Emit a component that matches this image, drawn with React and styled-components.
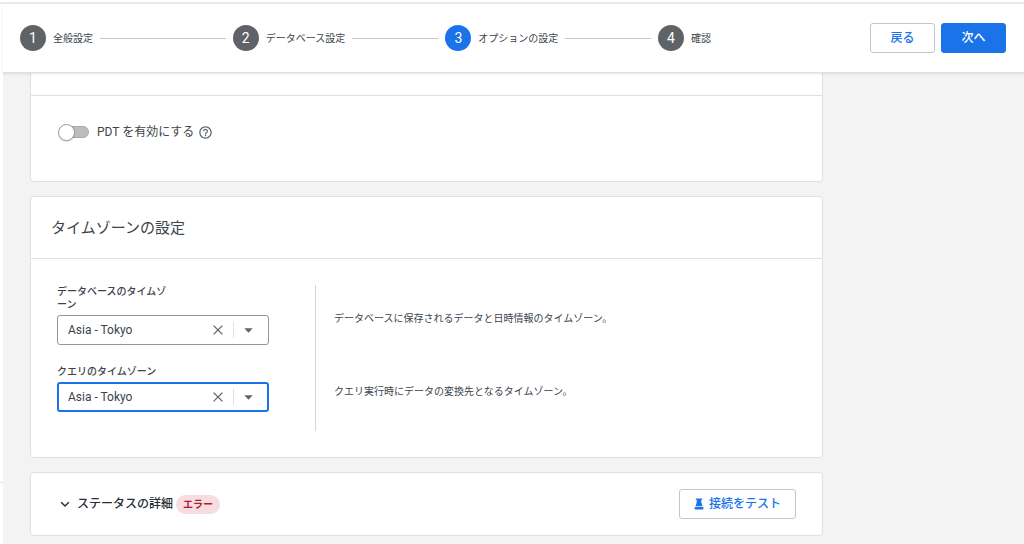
import React, { useState } from "react";
import styled, { createGlobalStyle } from "styled-components";

const line = "#dee0e2";
const ink = "#3c444b";
const blue = "#1a73e8";

const GlobalStyle = createGlobalStyle`
  *, *::before, *::after { box-sizing: border-box; }
  body {
    margin: 0;
    background: #f3f3f3;
    color: ${ink};
    font-family: Roboto, "Noto Sans CJK JP", sans-serif;
    font-size: 10px;
    line-height: 13px;
  }
  button, select, input { font: inherit; color: inherit; margin: 0; }
`;

const Shell = styled.div`
  display: grid;
  grid-template-columns: 3px minmax(0, 1fr);
  grid-template-rows: 4px auto;
  height: 100vh;
  overflow: hidden;
`;

const TopEdge = styled.div`
  grid-column: 1 / -1;
  background: #fff;
  border-bottom: 2px solid #e8e9ea;
`;

const Rail = styled.div`
  background: #fff;
  padding-top: 478px;
`;

const RailRule = styled.div`
  height: 1px;
  background: ${line};
`;

const Page = styled.div`
  min-width: 0;
`;

const Header = styled.header`
  position: relative;
  display: flex;
  align-items: center;
  justify-content: space-between;
  gap: 40px;
  height: 69px;
  padding: 0 18px 0 17px;
  background: #fff;
  border-bottom: 1px solid ${line};
  box-shadow: 0 1px 2px rgba(60, 64, 67, 0.12);
`;

const Stepper = styled.ol`
  flex: 1;
  display: flex;
  max-width: 691px;
  margin: 0;
  padding: 0;
  list-style: none;
`;

const Step = styled.li`
  flex: 1 1 0;
  display: flex;
  align-items: center;
  gap: 7px;
  white-space: nowrap;

  &:not(:last-child)::after {
    content: "";
    flex: 1;
    height: 1px;
    margin-right: 7px;
    background: #c4c7c9;
  }
  &:last-child { flex: none; }
`;

const StepNumber = styled.span`
  display: grid;
  place-items: center;
  width: 26px;
  height: 26px;
  border-radius: 50%;
  background: ${(p) => (p.$active ? blue : "#5f6368")};
  color: #fff;
  font-size: 14px;
`;

const Actions = styled.div`
  display: flex;
  gap: 6px;
`;

const Button = styled.button`
  display: flex;
  align-items: center;
  justify-content: center;
  gap: 5px;
  min-width: 65px;
  height: 30px;
  padding: 0 14px;
  border: 1px solid ${(p) => (p.$primary ? blue : "#c4c7c9")};
  border-radius: 3px;
  background: ${(p) => (p.$primary ? blue : "#fff")};
  color: ${(p) => (p.$primary ? "#fff" : blue)};
  font-size: 12px;
  font-weight: 500;
  white-space: nowrap;
`;

const Content = styled.main`
  display: flex;
  flex-direction: column;
  gap: 14px;
  max-width: 820px;
  padding: 0 0 8px 27px;
`;

const Card = styled.section`
  background: #fff;
  border: 1px solid ${line};
  border-radius: ${(p) => (p.$continued ? "0 0 4px 4px" : "4px")};
  border-top-width: ${(p) => (p.$continued ? "0" : "1px")};
`;

const CardHead = styled.div`
  display: flex;
  align-items: center;
  min-height: ${(p) => (p.$continued ? "23px" : "62px")};
  padding: 0 20px;
  border-bottom: 1px solid ${line};
`;

const CardTitle = styled.h2`
  margin: 0;
  font-size: 15px;
  font-weight: 400;
  line-height: 20px;
`;

const ToggleRow = styled.div`
  display: flex;
  align-items: center;
  padding: 26px 28px 39px;
  font-size: 12px;
  line-height: 20px;
`;

const ToggleLabel = styled.label`
  margin: 0 4px 0 8px;
`;

const Switch = styled.input.attrs({ type: "checkbox", role: "switch" })`
  appearance: none;
  display: flex;
  align-items: center;
  width: 30px;
  height: 12px;
  border: 1px solid #a9a9a9;
  border-radius: 6px;
  background: #bdbdbd;

  &::before {
    content: "";
    flex: none;
    width: 17px;
    height: 17px;
    margin-left: -2px;
    border: 1px solid #9a9a9a;
    border-radius: 50%;
    background: #fff;
    box-shadow: 0 1px 1px rgba(0, 0, 0, 0.15);
  }
  &:checked { justify-content: flex-end; background: ${blue}; }
`;

const HelpButton = styled.button`
  display: flex;
  padding: 0;
  border: 0;
  background: none;
  color: #5f6368;
`;

const Settings = styled.div`
  display: grid;
  grid-template-columns: 212px minmax(0, 1fr);
  column-gap: 46px;
  padding: 26px;
`;

const Fields = styled.div`
  display: flex;
  flex-direction: column;
  gap: 20px;
`;

const FieldLabel = styled.label`
  display: block;
  width: 116px;
  margin-bottom: 4px;
  font-weight: 500;
`;

const Combo = styled.div`
  position: relative;
`;

const Select = styled.select`
  appearance: none;
  display: block;
  width: 100%;
  height: 30px;
  padding: 0 64px 0 ${(p) => (p.$focused ? "9px" : "10px")};
  border: ${(p) => (p.$focused ? `2px solid ${blue}` : "1px solid #939799")};
  border-radius: 3px;
  background: #fff;
  font-size: 12px;
  outline: none;
`;

const ComboTools = styled.div`
  position: absolute;
  inset: 0 16px 0 auto;
  display: flex;
  align-items: center;
  gap: 10px;
  color: #5f6368;
  pointer-events: none;
`;

const ClearButton = styled.button`
  display: flex;
  padding: 0;
  border: 0;
  background: none;
  pointer-events: auto;
`;

const ToolRule = styled.span`
  width: 1px;
  height: 16px;
  background: ${line};
`;

const Notes = styled.div`
  display: grid;
  grid-template-rows: 73px 73px;
  align-items: center;
  align-self: start;
  padding-left: 18px;
  border-left: 1px solid #d3d5d7;
`;

const Note = styled.p`
  margin: 0;
  padding-bottom: 6px;
`;

const StatusRow = styled.div`
  display: flex;
  align-items: center;
  justify-content: space-between;
  min-height: 62px;
  padding: 0 26px 0 28px;
`;

const StatusGroup = styled.div`
  display: flex;
  align-items: center;
  gap: 3px;
`;

const Disclosure = styled.button`
  display: flex;
  align-items: center;
  gap: 6px;
  padding: 0;
  border: 0;
  background: none;
  color: #262d33;
  font-size: 12px;
  font-weight: 500;
`;

const Badge = styled.span`
  padding: 3px 7px;
  border-radius: 10px;
  background: #f7dce0;
  color: #ad1f36;
  font-weight: 700;
`;

const steps = ["全般設定", "データベース設定", "オプションの設定", "確認"];

function TimezoneField({ id, label, focused }) {
  const [zone, setZone] = useState("Asia - Tokyo");
  return (
    <div>
      <FieldLabel htmlFor={id}>{label}</FieldLabel>
      <Combo>
        <Select id={id} $focused={focused} value={zone} onChange={(e) => setZone(e.target.value)}>
          <option value="" />
          <option>Asia - Tokyo</option>
        </Select>
        <ComboTools>
          <ClearButton type="button" aria-label="クリア" onClick={() => setZone("")}>
            <svg width="10" height="10" viewBox="0 0 10 10" fill="none" stroke="currentColor" strokeWidth="1.3">
              <path d="M.6.6l8.800 8.800M9.400.6L.6 9.400" />
            </svg>
          </ClearButton>
          <ToolRule />
          <svg width="9" height="5" viewBox="0 0 9 5" fill="currentColor">
            <path d="M.3 .3h8.400L4.500 4.700z" />
          </svg>
        </ComboTools>
      </Combo>
    </div>
  );
}

export default function App() {
  return (
    <>
      <GlobalStyle />
      <Shell>
        <TopEdge />
        <Rail>
          <RailRule />
        </Rail>
        <Page>
          <Header>
            <Stepper>
              {steps.map((name, i) => (
                <Step key={name} aria-current={i === 2 ? "step" : undefined}>
                  <StepNumber $active={i === 2}>{i + 1}</StepNumber>
                  {name}
                </Step>
              ))}
            </Stepper>
            <Actions>
              <Button type="button">戻る</Button>
              <Button type="button" $primary>次へ</Button>
            </Actions>
          </Header>
          <Content>
            <Card $continued>
              <CardHead $continued />
              <ToggleRow>
                <Switch id="pdt" />
                <ToggleLabel htmlFor="pdt">PDT を有効にする</ToggleLabel>
                <HelpButton type="button" aria-label="ヘルプ">
                  <svg width="15" height="15" viewBox="0 0 24 24" fill="currentColor">
                    <path d="M11 18h2v-2h-2v2zm1-16C6.480 2 2 6.480 2 12s4.480 10 10 10 10-4.480 10-10S17.520 2 12 2zm0 18c-4.410 0-8-3.590-8-8s3.590-8 8-8 8 3.590 8 8-3.590 8-8 8zm0-14c-2.210 0-4 1.790-4 4h2c0-1.100.9-2 2-2s2 .9 2 2c0 2-3 1.750-3 5h2c0-2.250 3-2.500 3-5 0-2.210-1.790-4-4-4z" />
                  </svg>
                </HelpButton>
              </ToggleRow>
            </Card>
            <Card>
              <CardHead>
                <CardTitle>タイムゾーンの設定</CardTitle>
              </CardHead>
              <Settings>
                <Fields>
                  <TimezoneField id="db-zone" label="データベースのタイムゾーン" />
                  <TimezoneField id="query-zone" label="クエリのタイムゾーン" focused />
                </Fields>
                <Notes>
                  <Note>データベースに保存されるデータと日時情報のタイムゾーン。</Note>
                  <Note>クエリ実行時にデータの変換先となるタイムゾーン。</Note>
                </Notes>
              </Settings>
            </Card>
            <Card>
              <StatusRow>
                <StatusGroup>
                  <Disclosure type="button" aria-expanded="false">
                    <svg width="12" height="12" viewBox="0 0 12 12" fill="none" stroke="currentColor" strokeWidth="1.4">
                      <path d="M2.200 4.200L6 8l3.800-3.800" />
                    </svg>
                    ステータスの詳細
                  </Disclosure>
                  <Badge>エラー</Badge>
                </StatusGroup>
                <Button type="button">
                  <svg width="10" height="12" viewBox="0 0 10 12" fill="currentColor">
                    <path d="M1.800 0.500h6.400v1.300H7.300v2.600L8.600 8.300H1.400L2.700 4.400V1.800h-.9z" />
                    <rect x="0.500" y="9" width="9" height="2.500" rx="1" />
                  </svg>
                  接続をテスト
                </Button>
              </StatusRow>
            </Card>
          </Content>
        </Page>
      </Shell>
    </>
  );
}
